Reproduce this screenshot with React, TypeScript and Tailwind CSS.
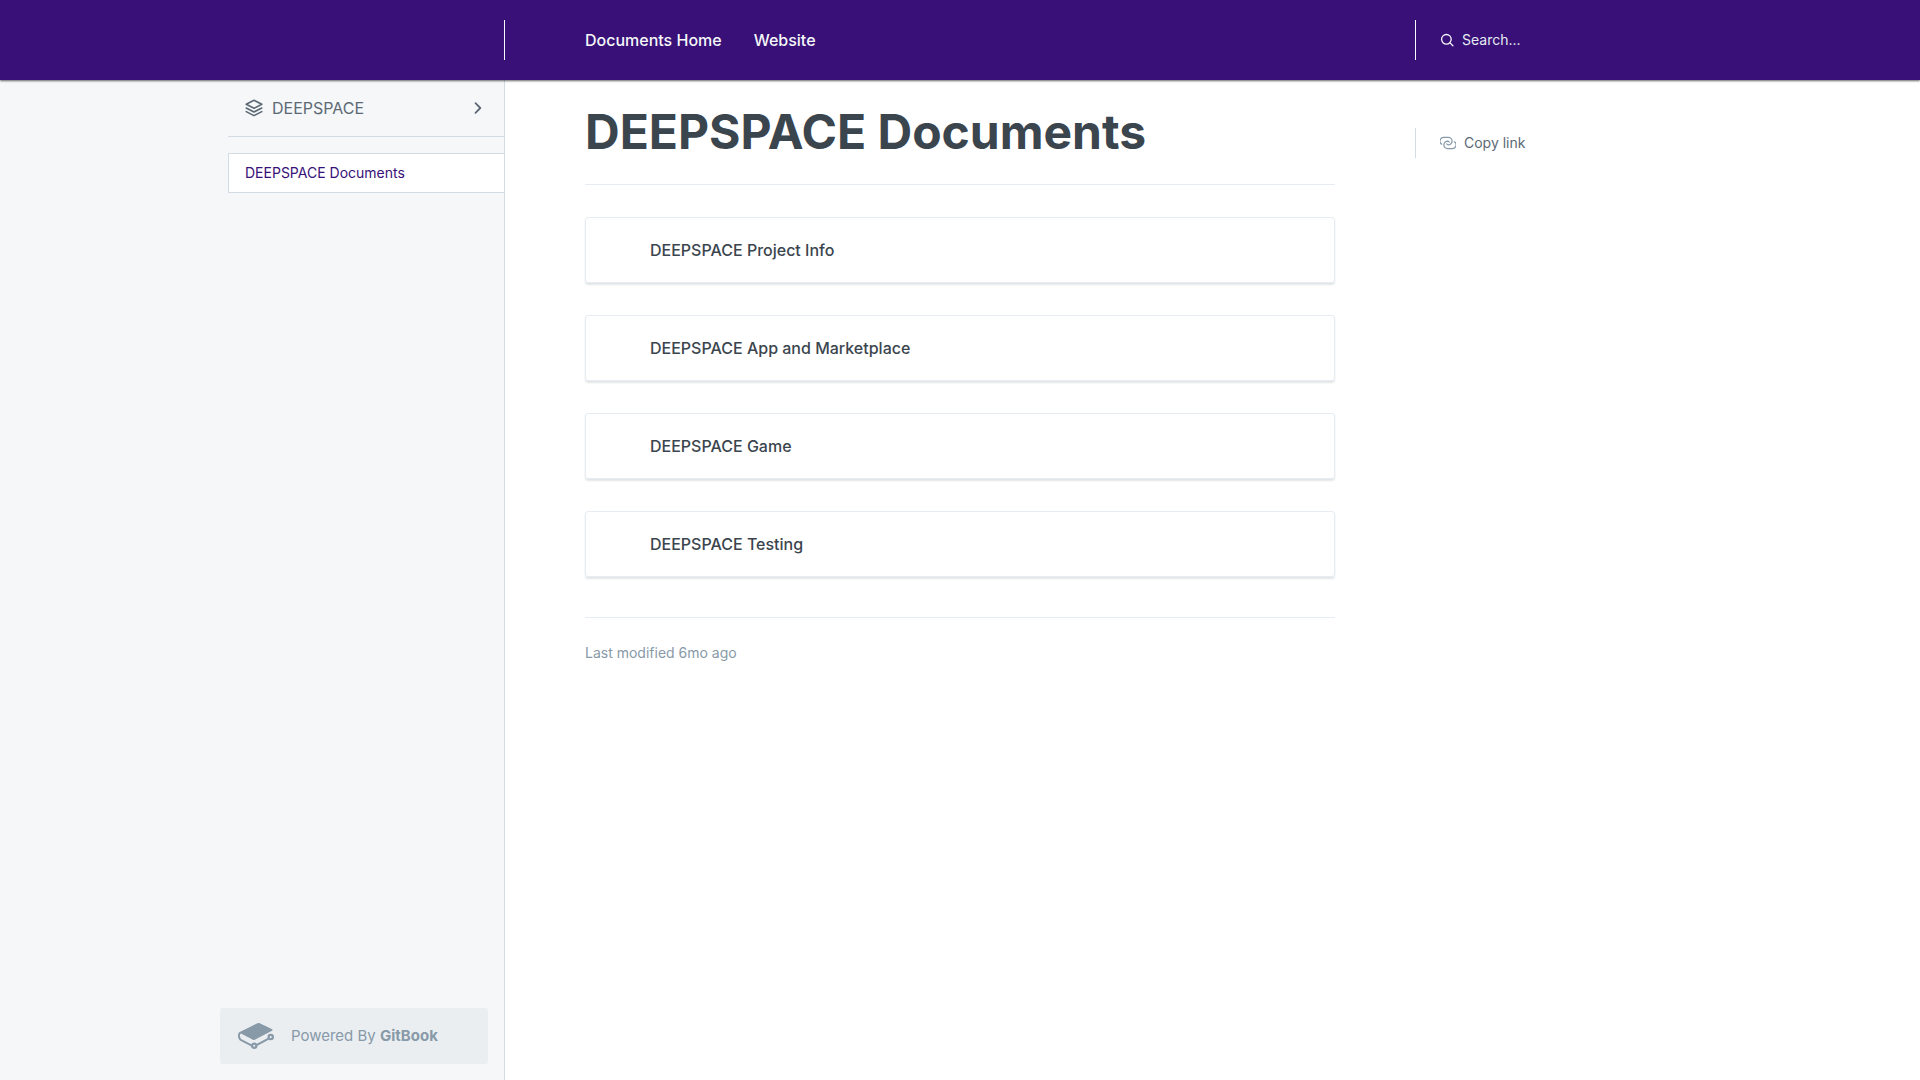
import React from "react";

const cards = [
  "DEEPSPACE Project Info",
  "DEEPSPACE App and Marketplace",
  "DEEPSPACE Game",
  "DEEPSPACE Testing",
];

function LayersIcon() {
  return (
    <svg className="size-5" viewBox="0 0 20 20" fill="none" stroke="currentColor" strokeWidth="1.6" strokeLinejoin="round" strokeLinecap="round" aria-hidden="true">
      <path d="M10 2.3 17.8 6.3 10 10.3 2.2 6.3Z" />
      <path d="M2.2 10 10 14 17.8 10" />
      <path d="M2.2 13.6 10 17.6 17.8 13.6" />
    </svg>
  );
}

function ChevronIcon() {
  return (
    <svg className="size-4" viewBox="0 0 16 16" fill="none" stroke="currentColor" strokeWidth="1.8" strokeLinejoin="round" strokeLinecap="round" aria-hidden="true">
      <path d="M5.5 3.2 10.3 8 5.5 12.8" />
    </svg>
  );
}

function SearchIcon() {
  return (
    <svg className="size-3.5" viewBox="0 0 14 14" fill="none" stroke="currentColor" strokeWidth="1.3" strokeLinecap="round" aria-hidden="true">
      <circle cx="6.4" cy="6.3" r="4.8" />
      <path d="M10 9.9 12.9 12.8" />
    </svg>
  );
}

function LinkIcon() {
  return (
    <svg className="size-4" viewBox="0 0 16 16" fill="none" stroke="currentColor" strokeWidth="1.2" strokeLinecap="round" aria-hidden="true">
      <path d="M1.7 9.2A3.7 3.7 0 0 1 4.2 2.4H8.2A3.7 3.7 0 0 1 8.6 9.8Q7.3 9.8 6.9 8.9" />
      <path d="M14.3 6.8A3.7 3.7 0 0 1 11.8 13.6H7.8A3.7 3.7 0 0 1 7.4 6.2Q8.7 6.2 9.1 7.1" />
    </svg>
  );
}

function GitBookLogo() {
  return (
    <svg className="size-9" viewBox="0 0 24 24" fill="currentColor" aria-hidden="true">
      <path d="M10.802 17.77a.703.703 0 11-.002 1.406.703.703 0 01.002-1.406m11.024-4.347a.703.703 0 11.001-1.406.703.703 0 01-.001 1.406m0-2.876a2.176 2.176 0 00-2.174 2.174c0 .233.039.465.115.691l-7.181 3.823a2.165 2.165 0 00-1.784-.937c-.829 0-1.584.475-1.95 1.216l-6.451-3.402c-.682-.358-1.192-1.48-1.138-2.502.028-.533.212-.947.493-1.107.178-.1.392-.092.62.027l.042.023c1.71.9 7.304 3.847 7.54 3.956.363.169.565.237 1.185-.057l11.564-6.014c.17-.064.368-.227.368-.474 0-.342-.354-.477-.355-.477-.658-.315-1.669-.788-2.655-1.25-2.108-.987-4.497-2.105-5.546-2.655-.906-.474-1.635-.074-1.765.006l-.252.125C7.78 6.048 1.46 9.178 1.1 9.397.457 9.789.058 10.57.006 11.539c-.08 1.537.703 3.14 1.824 3.727l6.822 3.518a2.175 2.175 0 002.15 1.862 2.177 2.177 0 002.173-2.14l7.514-4.073c.38.298.853.461 1.337.461A2.176 2.176 0 0024 12.72a2.176 2.176 0 00-2.174-2.174" />
    </svg>
  );
}

function Header() {
  return (
    <header className="relative z-10 flex h-20 items-center bg-[#381078] text-[#f5f7f9] shadow-[0_1px_2px_rgba(0,0,0,0.6)]">
      <div className="h-10 w-[505px] shrink-0 border-r border-[#f5f7f9]" />
      <nav className="flex min-w-0 max-w-[910px] flex-1 gap-8 pl-20 text-base font-medium">
        <a href="#home">Documents Home</a>
        <a href="#website">Website</a>
      </nav>
      <label className="flex h-10 items-center gap-2 border-l border-[#f5f7f9] pl-6 text-sm">
        <SearchIcon />
        <input
          type="search"
          aria-label="Search"
          placeholder="Search..."
          className="w-40 bg-transparent outline-none placeholder:text-[#e6ecf1]"
        />
      </label>
    </header>
  );
}

function Sidebar() {
  return (
    <aside className="flex w-[505px] shrink-0 flex-col border-r border-[#d3dce4] bg-[#f5f7f9] pl-[220px]">
      <button className="ml-2 flex h-[57px] items-center gap-2 border-b border-[#d3dce4] pr-[18px] pl-4 text-base text-[#5c6975]">
        <LayersIcon />
        <span className="flex-1 text-left">DEEPSPACE</span>
        <ChevronIcon />
      </button>
      <a
        href="#documents"
        aria-current="page"
        className="mt-4 ml-2 border border-r-0 border-[#d3dce4] bg-white px-4 py-[9px] text-sm text-[#381078]"
      >
        DEEPSPACE Documents
      </a>
      <a
        href="#gitbook"
        className="mt-auto mr-4 mb-4 flex h-14 items-center gap-[17px] rounded-[3px] bg-[#eaeef1] pl-[18px] text-[15px] text-[#8899a8]"
      >
        <GitBookLogo />
        <span>
          Powered By <strong className="font-bold">GitBook</strong>
        </span>
      </a>
    </aside>
  );
}

export default function App() {
  return (
    <div className="flex min-h-screen flex-col bg-white font-['Inter','Liberation_Sans',sans-serif] text-[#3b454e]">
      <Header />
      <div className="flex flex-1">
        <Sidebar />
        <main className="min-w-0 max-w-[910px] flex-1 px-20">
          <h1 className="border-b border-[#e6ecf1] pt-5 pb-5 text-5xl leading-[64px] font-bold">
            DEEPSPACE Documents
          </h1>
          <div className="mt-8 flex flex-col gap-8">
            {cards.map((title) => (
              <a
                key={title}
                href="#card"
                className="flex h-[66px] items-center rounded-[3px] border border-[#e6ecf1] pl-16 text-base font-medium shadow-[0_2px_2px_rgba(116,129,141,0.2)]"
              >
                {title}
              </a>
            ))}
          </div>
          <p className="mt-10 border-t border-[#e6ecf1] pt-[25px] text-sm text-[#8899a8]">
            Last modified 6mo ago
          </p>
        </main>
        <div className="pt-12">
          <button className="flex h-[30px] items-center gap-2 border-l border-[#d3dce4] pl-6 text-sm text-[#5c6975]">
            <span className="text-[#8899a8]">
              <LinkIcon />
            </span>
            Copy link
          </button>
        </div>
      </div>
    </div>
  );
}
